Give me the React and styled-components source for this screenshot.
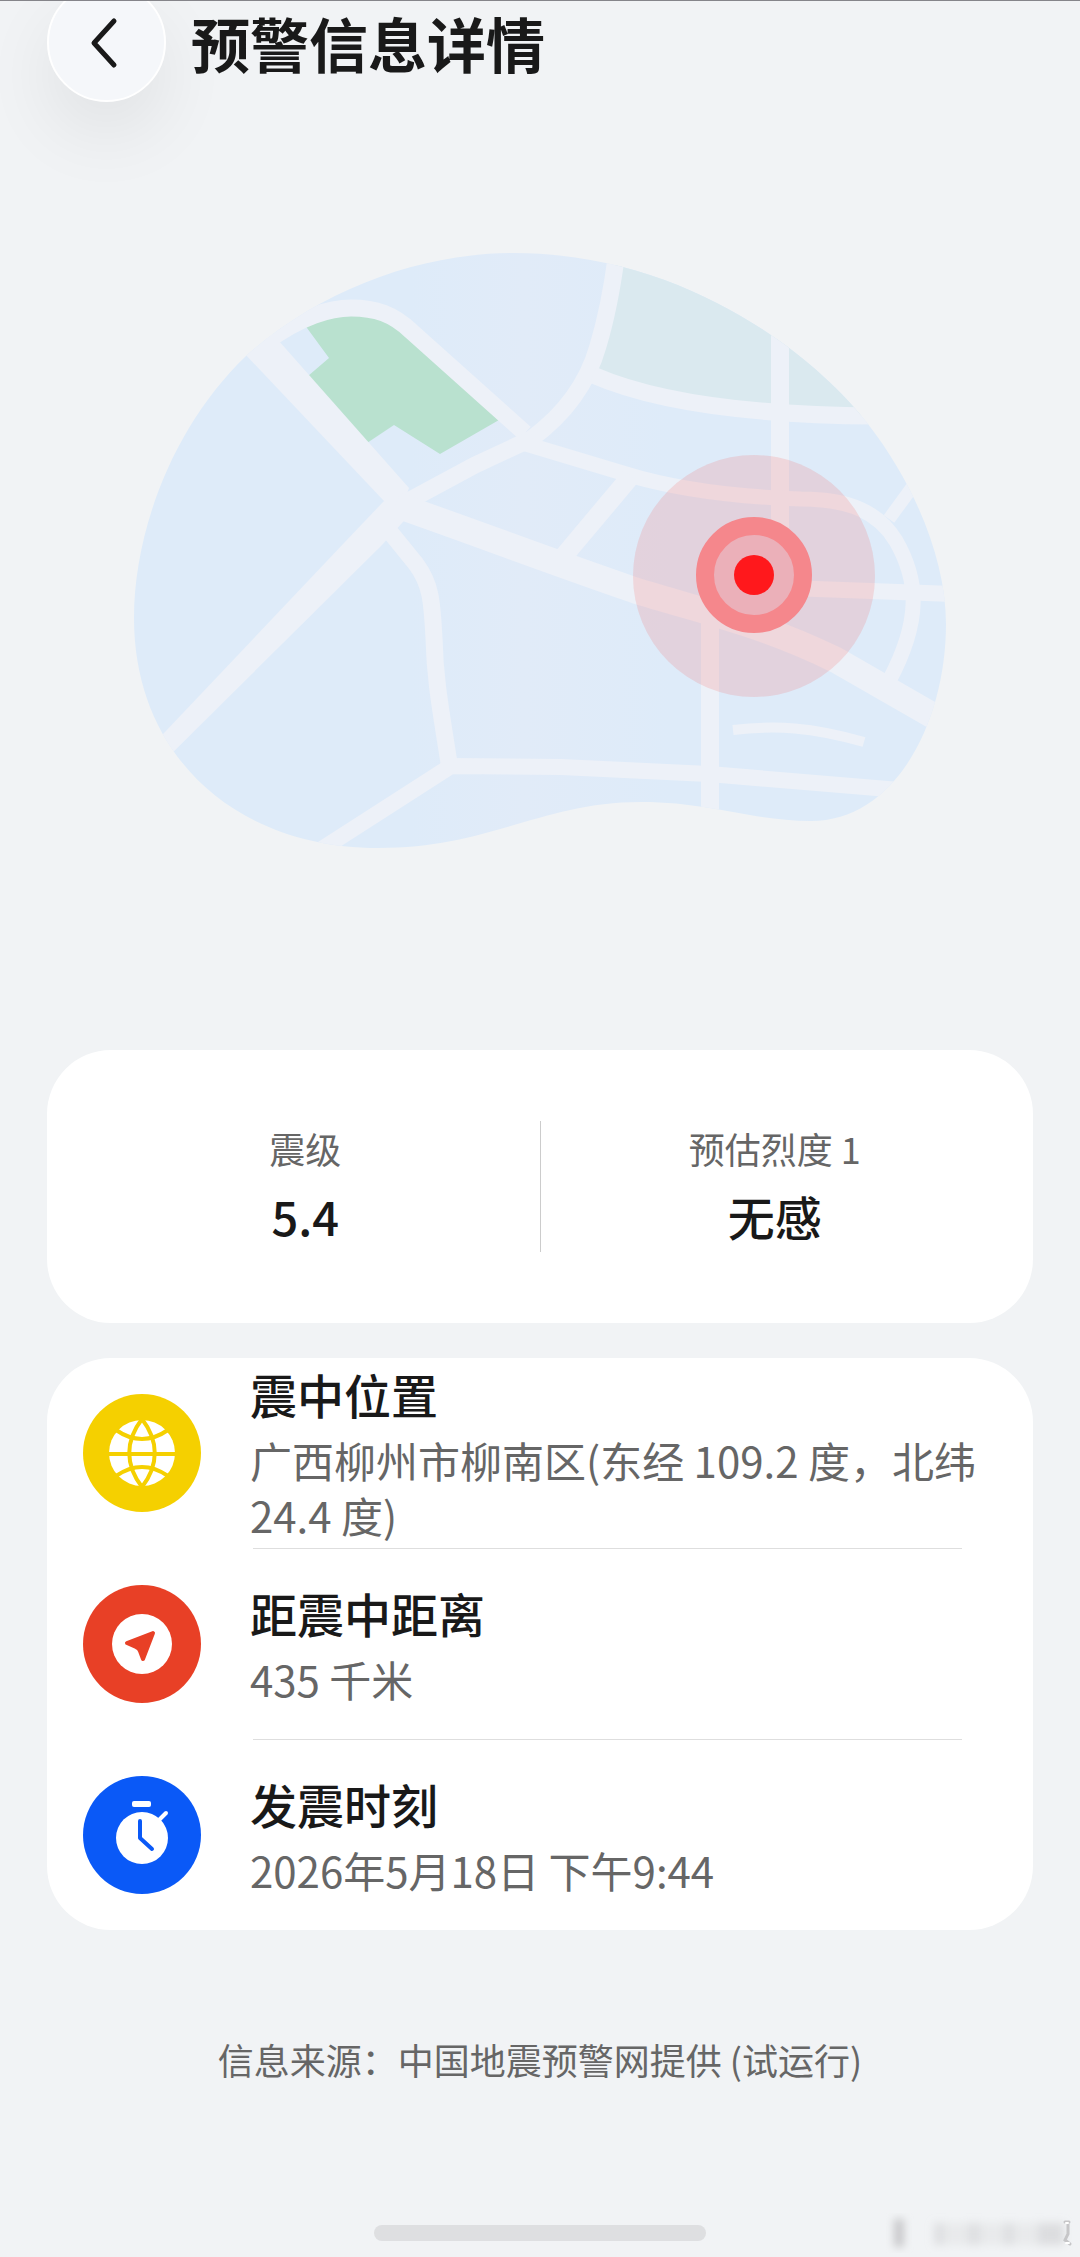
import React from "react";
import styled, { createGlobalStyle } from "styled-components";

const GlobalStyle = createGlobalStyle`
  * {
    box-sizing: border-box;
  }
  body {
    margin: 0;
    background-color: #f1f3f5;
    color: #191919;
    font-family: "Noto Sans CJK SC", sans-serif;
  }
  h1, h2, p, dl, dt, dd, ul {
    margin: 0;
    padding: 0;
  }
`;

const Page = styled.div`
  position: relative;
  display: flex;
  flex-direction: column;
  min-height: 100vh;
  padding: 0 47px 16px;
  overflow: hidden;
  border-top: 1px solid #85858a;
`;

const Header = styled.header`
  display: flex;
  align-items: center;
  gap: 25px;
  margin-top: -18px;
`;

const BackButton = styled.button`
  display: flex;
  align-items: center;
  justify-content: center;
  width: 119px;
  height: 119px;
  padding: 0;
  border: 2px solid #ffffff;
  border-radius: 50%;
  background-color: #f5f7fa;
  box-shadow: 0 32px 72px rgba(0, 0, 0, 0.07);
  cursor: pointer;
`;

const Title = styled.h1`
  font-size: 59px;
  font-weight: 700;
  line-height: 80px;
`;

const MapArea = styled.div`
  display: flex;
  justify-content: center;
  padding: 151px 0 201px;
`;

const MapSvg = styled.svg`
  display: block;
  width: 100%;
  max-width: 812px;
  height: auto;
`;

const Card = styled.section`
  border-radius: 64px;
  background-color: #ffffff;
`;

const Summary = styled(Card)`
  padding: 71px 24px;
  margin-bottom: 35px;
`;

const Stats = styled.dl`
  display: flex;
`;

const Stat = styled.div`
  flex: 1;
  display: flex;
  flex-direction: column;
  align-items: center;
  justify-content: flex-end;
  gap: 8px;
  height: 131px;

  & + & {
    border-left: 1px solid #cccccc;
  }
`;

const StatLabel = styled.dt`
  color: #666666;
  font-size: 36px;
  line-height: 48px;
`;

const StatValue = styled.dd`
  font-size: 47px;
  font-weight: 500;
  line-height: 72px;
`;

const List = styled.ul`
  list-style: none;
`;

const Row = styled.li`
  display: flex;
  align-items: center;
  gap: 48px;
  padding-left: 35px;
`;

const RowIcon = styled.svg`
  flex: none;
  width: 120px;
  height: 120px;
`;

const RowBody = styled.div`
  flex: 1;
  display: flex;
  flex-direction: column;
  justify-content: center;
  gap: 8px;
  min-height: 190px;
  padding-right: 48px;
`;

const Divider = styled.li`
  height: 1px;
  margin: 0 71px 0 206px;
  background-color: #dedede;
`;

const RowTitle = styled.h2`
  font-size: 47px;
  font-weight: 500;
  line-height: 60px;
`;

const RowText = styled.p`
  color: #666666;
  font-size: 42px;
  line-height: 55px;
`;

const Source = styled.p`
  margin: 105px 0 48px;
  color: #666666;
  font-size: 36px;
  line-height: 48px;
  text-align: center;
`;

const HomeBar = styled.div`
  align-self: center;
  width: 332px;
  height: 16px;
  margin-top: auto;
  border-radius: 8px;
  background-color: #dedfe1;
`;

const Watermark = styled.svg`
  position: absolute;
  right: 4px;
  bottom: 4px;
  width: 190px;
  height: 44px;
`;

const ROADS = [
  { d: "M265 341 C300 315 330 307 350 307 C375 307 392 313 410 330 L524 432", width: 17 },
  { d: "M398 505 L474 464 L530 438 C575 405 590 370 597 345 C606 315 611 290 616 250", width: 17 },
  { d: "M592 374 C640 395 720 414 875 415", width: 17 },
  { d: "M779 310 V590", width: 18 },
  { d: "M525 443 L625 473 C680 490 740 496 800 498 C850 498 878 512 895 540 C918 580 920 620 888 680", width: 15 },
  { d: "M888 518 L920 474", width: 13 },
  { d: "M630 475 L562 556", width: 19 },
  { d: "M395 504 C470 530 540 557 633 589 C700 610 760 622 835 659 L950 725", width: 26 },
  { d: "M385 526 L415 563 C430 583 431 600 433 637 C434 680 440 710 448 762", width: 17 },
  { d: "M310 855 L450 765 L560 766 L708 773 L910 790", width: 16 },
  { d: "M709 605 V815", width: 18 },
  { d: "M760 586 L955 593", width: 16 },
  { d: "M732 729 C775 724 810 726 863 741", width: 10 }
];

const EpicenterMap = () => (
  <MapSvg viewBox="133 252 812 596" role="img" aria-label="震中位置地图">
    <defs>
      <clipPath id="land">
        <path d="M133 617 C133 530 172 425 245 355 C320 288 420 252 513 252 C680 252 810 350 867 423 C915 485 945 560 945 623 C945 720 895 820 810 820 C750 820 710 801 640 801 C540 801 490 847 377 847 C235 847 133 755 133 617Z" />
      </clipPath>
      <linearGradient id="water" x1="0" y1="0" x2="1" y2="0">
        <stop offset="0.34" stopColor="#deebf9" />
        <stop offset="0.48" stopColor="#e1ebf8" />
        <stop offset="0.66" stopColor="#deebf9" />
      </linearGradient>
    </defs>
    <g clipPath="url(#land)">
      <rect x="133" y="252" width="812" height="596" fill="url(#water)" />
      <path d="M616 250 H880 V415 C720 414 640 395 592 374 C606 330 611 290 616 250Z" fill="#dae9ef" />
      <path
        d="M306 327 L300 318 C326 308 380 300 400 325 L498 419 L439 453 L393 424 L366 442 L307 375 L328 357Z"
        fill="#b9e1cf"
      />
      <g fill="#edf1f8">
        <path d="M225 333 L262 322 L408 487 L398 515 L383 500Z" />
        <path d="M383 500 L412 510 L380 545 L155 768 L145 751 L343 542Z" />
      </g>
      <g fill="none" stroke="#edf1f8">
        {ROADS.map(road => (
          <path key={road.d} d={road.d} strokeWidth={road.width} />
        ))}
      </g>
    </g>
    <circle cx="753" cy="575" r="121" fill="#f74f49" fillOpacity="0.16" />
    <circle cx="753" cy="574" r="49" fill="#ebb0b9" stroke="#f5878c" strokeWidth="18" />
    <circle cx="753" cy="574" r="20" fill="#ff181c" />
  </MapSvg>
);

const GlobeIcon = () => (
  <RowIcon viewBox="-60 -60 120 120" aria-hidden="true">
    <circle r="59" fill="#f5d000" />
    <circle r="33" fill="#ffffff" />
    <g fill="none" stroke="#f5d000" strokeWidth="4">
      <path d="M-35 1 H35" />
      <path d="M0 -34 C-17 -12 -17 12 0 34" />
      <path d="M0 -34 C17 -12 17 12 0 34" />
      <path d="M-26 -23 Q0 -5 26 -23" />
      <path d="M-26 23 Q0 5 26 23" />
    </g>
  </RowIcon>
);

const CompassIcon = () => (
  <RowIcon viewBox="-60 -60 120 120" aria-hidden="true">
    <circle r="59" fill="#e84026" />
    <circle r="30" fill="#ffffff" />
    <path
      d="M11 -11 L-15 -1 L-6 3 Q-3 4 -2 7 L1 15Z"
      fill="#e84026"
      stroke="#e84026"
      strokeWidth="4"
      strokeLinejoin="round"
    />
  </RowIcon>
);

const StopwatchIcon = () => (
  <RowIcon viewBox="-60 -60 120 120" aria-hidden="true">
    <circle r="59" fill="#0a59f7" />
    <circle cx="0" cy="3" r="26" fill="#ffffff" />
    <rect x="-10" y="-34" width="19" height="6" rx="2" fill="#ffffff" />
    <path d="M18 -16 L24 -22" stroke="#ffffff" strokeWidth="4" strokeLinecap="round" />
    <path
      d="M-2 -14 V3 L10 14"
      fill="none"
      stroke="#0a59f7"
      strokeWidth="4"
      strokeLinecap="round"
      strokeLinejoin="round"
    />
  </RowIcon>
);

const DETAILS = [
  {
    title: "震中位置",
    text: "广西柳州市柳南区(东经 109.2 度，北纬 24.4 度)",
    Icon: GlobeIcon
  },
  { title: "距震中距离", text: "435 千米", Icon: CompassIcon },
  { title: "发震时刻", text: "2026年5月18日 下午9:44", Icon: StopwatchIcon }
];

const App = () => (
  <>
    <GlobalStyle />
    <Page>
      <Header>
        <BackButton type="button" aria-label="返回">
          <svg width="40" height="60" viewBox="0 0 40 60" aria-hidden="true">
            <path
              d="M27 8 L7 30 L27 52"
              fill="none"
              stroke="#191919"
              strokeWidth="5"
              strokeLinecap="round"
              strokeLinejoin="round"
            />
          </svg>
        </BackButton>
        <Title>预警信息详情</Title>
      </Header>
      <MapArea>
        <EpicenterMap />
      </MapArea>
      <Summary>
        <Stats>
          <Stat>
            <StatLabel>震级</StatLabel>
            <StatValue>5.4</StatValue>
          </Stat>
          <Stat>
            <StatLabel>预估烈度 1</StatLabel>
            <StatValue>无感</StatValue>
          </Stat>
        </Stats>
      </Summary>
      <Card>
        <List>
          {DETAILS.map(({ title, text, Icon }, index) => (
            <React.Fragment key={title}>
              {index > 0 && <Divider role="separator" />}
              <Row>
                <Icon />
                <RowBody>
                  <RowTitle>{title}</RowTitle>
                  <RowText>{text}</RowText>
                </RowBody>
              </Row>
            </React.Fragment>
          ))}
        </List>
      </Card>
      <Source>信息来源：中国地震预警网提供 (试运行)</Source>
      <HomeBar />
      <Watermark viewBox="0 0 190 44" aria-hidden="true">
        <defs>
          <filter id="soft" x="-20%" y="-20%" width="140%" height="140%">
            <feGaussianBlur stdDeviation="4" />
          </filter>
        </defs>
        <g filter="url(#soft)" fill="#c8c8ca">
          <rect x="8" y="10" width="10" height="28" />
          <rect x="48" y="14" width="130" height="22" opacity="0.2" />
          <rect x="48" y="14" width="10" height="22" opacity="0.3" />
          <rect x="82" y="14" width="12" height="22" opacity="0.3" />
          <rect x="118" y="14" width="10" height="22" opacity="0.3" />
          <rect x="152" y="14" width="26" height="22" opacity="0.4" />
        </g>
        <g fill="none" strokeLinecap="round">
          <path d="M179 13 h4 M182 15 v10 l-3 6 l5 4" stroke="#c6c6c8" strokeWidth="3" />
          <path d="M180 14 h2 M180 34 h3" stroke="#ffffff" strokeWidth="2" />
        </g>
      </Watermark>
    </Page>
  </>
);

export default App;
